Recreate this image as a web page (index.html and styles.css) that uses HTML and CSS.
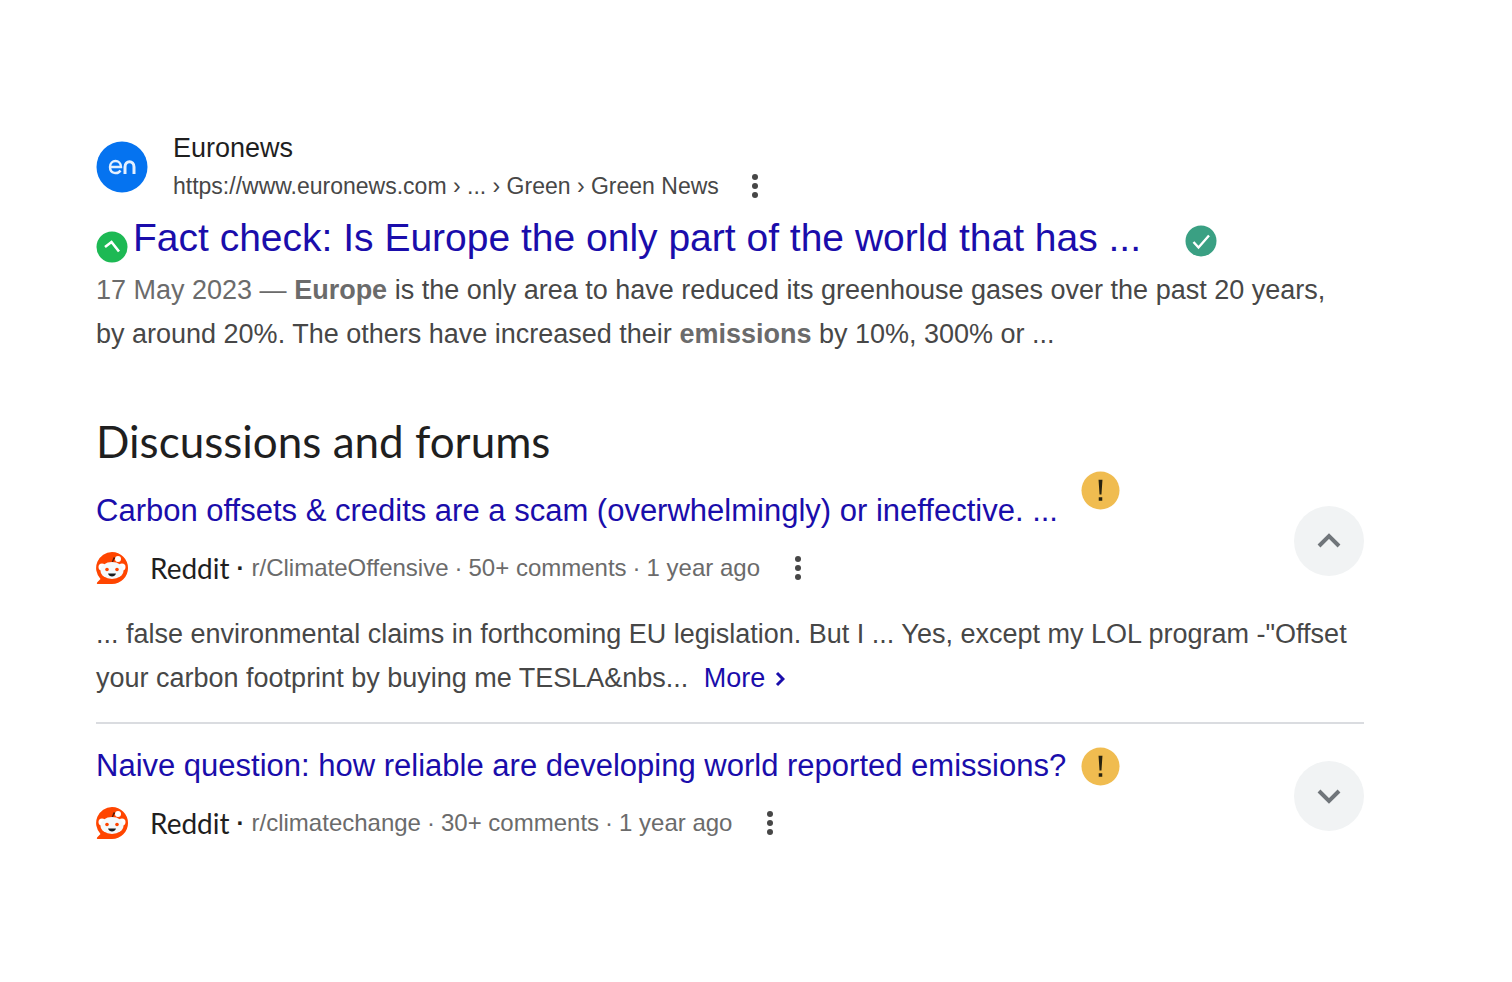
FILE: index.html
```html
<!DOCTYPE html>
<html lang="en">
	<head>
		<meta charset="UTF-8" />
		<meta name="viewport" content="width=device-width, initial-scale=1.0" />
		<title>Search results</title>

		<link rel="stylesheet" href="styles.css">
	</head>
	<body>
		<main>
			<article class="result">
				<header class="site">
					<svg class="favicon" viewBox="0 0 52 52" aria-hidden="true">
						<circle cx="26" cy="26" r="25.5" fill="#0573f0" />
						<g fill="none" stroke="#e4f0ff" stroke-width="2.4">
							<path d="M14 26h11c0-8-11-8-11 0 0 7 8 7.500 10.500 3.500" />
							<path d="M29 33v-7c0-7 9-7 9 0v7" stroke-width="3" />
						</g>
					</svg>
					<div>
						<p class="site_name">Euronews</p>
						<div class="site_line">
							<cite>https://www.euronews.com › ... › Green › Green News</cite>
							<button class="menu" type="button" aria-label="About this result">
								<svg viewBox="0 0 8 24"><circle cx="4" cy="3" r="3" /><circle cx="4" cy="12" r="3" /><circle cx="4" cy="21" r="3" /></svg>
							</button>
						</div>
					</div>
				</header>
				<div class="result_title">
					<svg class="badge badge_up" viewBox="0 0 32 32" aria-hidden="true">
						<circle cx="16" cy="16" r="15.500" fill="#1db954" />
						<path d="M9 16l6.500-5 7.500 9.500" fill="none" stroke="#fff" stroke-width="2.600" />
					</svg>
					<h3><a href="#">Fact check: Is Europe the only part of the world that has ...</a></h3>
					<svg class="badge badge_check" viewBox="0 0 32 32" aria-hidden="true">
						<circle cx="16" cy="16" r="15.500" fill="#3aa083" />
						<path d="M8.500 17l5 5.500L24 10.500" fill="none" stroke="#fff" stroke-width="2.400" />
					</svg>
				</div>
				<p class="snippet"><span class="date">17 May 2023 — </span><b>Europe</b> is the only area to have reduced its greenhouse gases over the past 20 years, by around 20%. The others have increased their <b>emissions</b> by 10%, 300% or ...</p>
			</article>

			<section class="forums">
				<h2>Discussions and forums</h2>

				<article class="topic">
					<header class="topic_head">
						<div class="topic_info">
							<div class="topic_title raised">
								<h3><a href="#">Carbon offsets &amp; credits are a scam (overwhelmingly) or ineffective. ...</a></h3>
								<svg class="warning" viewBox="0 0 40 40" role="img" aria-label="Warning">
									<circle cx="20" cy="20" r="19.500" fill="#f0bc50" />
									<path d="M18 9h4l-1 15h-2zM18.200 27h3.600v3.600h-3.600z" fill="#292310" />
								</svg>
							</div>
							<div class="meta">
								<svg class="reddit" viewBox="0 0 32 32" aria-hidden="true">
									<path d="M16 0a16 16 0 0 1 0 32H2c-1.500 0-1.500-1-.5-2l3-3A16 16 0 0 1 16 0z" fill="#ff4500" />
									<path d="M16 11l2-5 5 1" fill="none" stroke="#5c1a05" stroke-width="1.400" />
									<circle cx="22" cy="7" r="3" fill="#fff" />
									<circle cx="6" cy="15" r="3.500" fill="#fff" />
									<circle cx="26" cy="15" r="3.500" fill="#fff" />
									<ellipse cx="16" cy="18.500" rx="11.500" ry="8.500" fill="#f5f9fb" />
									<circle cx="11" cy="17.500" r="1.800" fill="#ff4500" />
									<circle cx="21" cy="17.500" r="1.800" fill="#ff4500" />
									<path d="M12 21.500h8c-1 4-7 4-8 0z" fill="#171c20" />
								</svg>
								<span class="source">Reddit</span><span class="dot">·</span><span>r/ClimateOffensive</span><span class="dot thin">·</span><span>50+ comments</span><span class="dot thin">·</span><span>1 year ago</span>
								<button class="menu" type="button" aria-label="About this result">
									<svg viewBox="0 0 8 24"><circle cx="4" cy="3" r="3" /><circle cx="4" cy="12" r="3" /><circle cx="4" cy="21" r="3" /></svg>
								</button>
							</div>
						</div>
						<button class="toggle" type="button" aria-expanded="true" aria-label="Collapse">
							<svg viewBox="0 0 24 16"><path d="M2 13L12 3l10 10" /></svg>
						</button>
					</header>
					<p class="snippet">... false environmental claims in forthcoming EU legislation. But I ... Yes, except my LOL program -"Offset your carbon footprint by buying me TESLA&amp;nbs... <a class="more" href="#">More <svg viewBox="0 0 10 16"><path d="M2 2l6 6-6 6" /></svg></a></p>
				</article>

				<article class="topic">
					<header class="topic_head">
						<div class="topic_info">
							<div class="topic_title">
								<h3><a href="#">Naive question: how reliable are developing world reported emissions?</a></h3>
								<svg class="warning" viewBox="0 0 40 40" role="img" aria-label="Warning">
									<circle cx="20" cy="20" r="19.500" fill="#f0bc50" />
									<path d="M18 9h4l-1 15h-2zM18.200 27h3.600v3.600h-3.600z" fill="#292310" />
								</svg>
							</div>
							<div class="meta">
								<svg class="reddit" viewBox="0 0 32 32" aria-hidden="true">
									<path d="M16 0a16 16 0 0 1 0 32H2c-1.500 0-1.500-1-.5-2l3-3A16 16 0 0 1 16 0z" fill="#ff4500" />
									<path d="M16 11l2-5 5 1" fill="none" stroke="#5c1a05" stroke-width="1.400" />
									<circle cx="22" cy="7" r="3" fill="#fff" />
									<circle cx="6" cy="15" r="3.500" fill="#fff" />
									<circle cx="26" cy="15" r="3.500" fill="#fff" />
									<ellipse cx="16" cy="18.500" rx="11.500" ry="8.500" fill="#f5f9fb" />
									<circle cx="11" cy="17.500" r="1.800" fill="#ff4500" />
									<circle cx="21" cy="17.500" r="1.800" fill="#ff4500" />
									<path d="M12 21.500h8c-1 4-7 4-8 0z" fill="#171c20" />
								</svg>
								<span class="source">Reddit</span><span class="dot">·</span><span>r/climatechange</span><span class="dot thin">·</span><span>30+ comments</span><span class="dot thin">·</span><span>1 year ago</span>
								<button class="menu" type="button" aria-label="About this result">
									<svg viewBox="0 0 8 24"><circle cx="4" cy="3" r="3" /><circle cx="4" cy="12" r="3" /><circle cx="4" cy="21" r="3" /></svg>
								</button>
							</div>
						</div>
						<button class="toggle" type="button" aria-expanded="false" aria-label="Expand">
							<svg viewBox="0 0 24 16"><path d="M2 3l10 10L22 3" /></svg>
						</button>
					</header>
				</article>
			</section>
		</main>
	</body>
</html>
```
FILE: styles.css
```css
* {
	padding: 0;
	margin: 0;
	border: 0;
	box-sizing: border-box;
}
body {
	background-color: #fff;
	color: #474747;
	font-family: "Liberation Sans", Arial, sans-serif;
}
a {
	color: #1a0dab;
	text-decoration: none;
}
button {
	background: none;
	cursor: pointer;
}
svg {
	flex-shrink: 0;
}
h2,
h3 {
	font-weight: normal;
}

main {
	padding: 129px 148px 80px 96px;
}

/* main result */
.site {
	display: flex;
	align-items: center;
	gap: 25px;
}

.favicon {
	width: 52px;
	height: 52px;
}

.site_name {
	color: #1f1f1f;
	font-size: 27px;
	line-height: 38px;
}

.site_line {
	display: flex;
	align-items: center;
	gap: 32px;
	font-size: 23px;
	line-height: 38px;
}

.site_line cite {
	font-style: normal;
}

.menu {
	display: flex;
}

.menu svg {
	width: 8px;
	height: 24px;
	fill: #474747;
}

.result_title {
	display: flex;
	align-items: flex-end;
	margin-top: 8px;
}

.result_title h3 {
	font-size: 39px;
	line-height: 50px;
}

.badge {
	width: 32px;
	height: 32px;
}

.badge_up {
	margin-right: 5px;
}

.badge_check {
	align-self: center;
	margin: 6px 0 0 44px;
}

.snippet {
	margin-top: 5px;
	padding-right: 12px;
	font-size: 27px;
	line-height: 44px;
}

.snippet b,
.date {
	color: #6b6b6b;
}

/* forums */
.forums h2 {
	margin: 61px 0 6px;
	color: #1f1f1f;
	font-family: Lato, sans-serif;
	font-size: 44px;
	line-height: 48px;
}

.topic_head {
	display: flex;
	align-items: flex-end;
	justify-content: space-between;
}

.topic_info {
	min-width: 0;
}

.topic_title {
	display: flex;
	align-items: center;
	gap: 13px;
}

.topic_title h3 {
	width: 972px;
	overflow: hidden;
	font-size: 31px;
	line-height: 40px;
	white-space: nowrap;
}

.raised {
	height: 60px;
	align-items: flex-end;
}

.raised .warning {
	align-self: flex-start;
}

.warning {
	width: 39px;
	height: 39px;
}

.meta {
	display: flex;
	align-items: center;
	margin-top: 17px;
	color: #6b6b6b;
	font-size: 24px;
	line-height: 40px;
}

.reddit {
	width: 32px;
	height: 32px;
	margin-right: 22px;
}

.source {
	color: #1f1f1f;
	font-family: Lato, sans-serif;
	font-size: 28px;
	line-height: 38px;
}

.dot {
	width: 22px;
	color: #1f1f1f;
	font-weight: bold;
	text-align: center;
}

.thin {
	width: 20px;
	color: #6b6b6b;
	font-weight: normal;
}

.meta .menu {
	margin-left: 34px;
}

.toggle {
	display: flex;
	flex-shrink: 0;
	align-items: center;
	justify-content: center;
	width: 70px;
	height: 70px;
	margin-bottom: 12px;
	border-radius: 50%;
	background-color: #f1f3f4;
}

.toggle svg {
	width: 24px;
	height: 16px;
	fill: none;
	stroke: #70757a;
	stroke-width: 4;
}

.topic .snippet {
	margin-top: 24px;
}

.more {
	margin-left: 8px;
}

.more svg {
	width: 10px;
	height: 16px;
	margin-left: 2px;
	fill: none;
	stroke: #1a0dab;
	stroke-width: 3;
}

.topic + .topic {
	margin-top: 22px;
	padding-top: 22px;
	border-top: 2px solid #dadce0;
}
```
